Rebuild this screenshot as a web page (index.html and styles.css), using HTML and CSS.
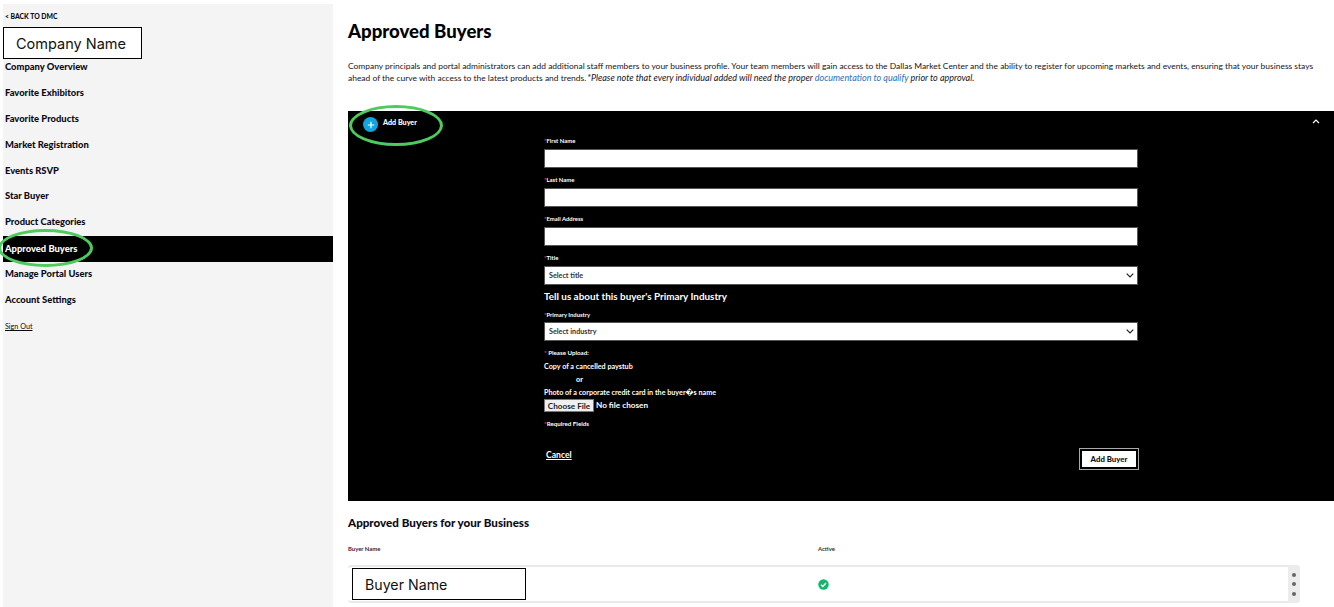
FILE: index.html
```html
<!DOCTYPE html>
<html lang="en">
<head>
<meta charset="utf-8">
<title>Approved Buyers</title>
<link rel="stylesheet" href="styles.css">
</head>
<body>
<div class="page">
  <aside class="sidebar">
    <a class="back" href="#">&lt; BACK TO DMC</a>
    <div class="company-box">Company Name</div>
    <nav class="nav">
      <a class="nav-item" href="#">Company Overview</a>
      <a class="nav-item" href="#">Favorite Exhibitors</a>
      <a class="nav-item" href="#">Favorite Products</a>
      <a class="nav-item" href="#">Market Registration</a>
      <a class="nav-item" href="#">Events RSVP</a>
      <a class="nav-item" href="#">Star Buyer</a>
      <a class="nav-item" href="#">Product Categories</a>
      <a class="nav-item active" href="#">Approved Buyers<span class="ring ring-nav"></span></a>
      <a class="nav-item" href="#">Manage Portal Users</a>
      <a class="nav-item" href="#">Account Settings</a>
    </nav>
    <a class="signout" href="#">Sign Out</a>
  </aside>
  <main class="main">
    <h1 class="title">Approved Buyers</h1>
    <p class="intro">Company principals and portal administrators can add additional staff members to your business profile. Your team members will gain access to the Dallas Market Center and the ability to register for upcoming markets and events, ensuring that your business stays<br>ahead of the curve with access to the latest products and trends. <em class="note">*Please note that every individual added will need the proper <a class="doc-link" href="#">documentation to qualify</a> prior to approval.</em></p>
    <section class="panel">
      <div class="panel-head">
        <div class="add-toggle">
          <span class="plus">
            <svg width="8" height="8" viewBox="0 0 8 8"><path d="M4 .8v6.4M.8 4h6.4" stroke="#fff" stroke-width="1.2" fill="none"/></svg>
          </span>
          <span class="add-label">Add Buyer</span>
          <span class="ring ring-add"></span>
        </div>
        <svg class="collapse" width="8" height="5" viewBox="0 0 8 5"><path d="M1 4l3-3 3 3" stroke="#fff" stroke-width="1.2" fill="none"/></svg>
      </div>
      <form class="form">
        <label class="label"><span class="req">*</span>First Name</label>
        <div class="input"></div>
        <label class="label"><span class="req">*</span>Last Name</label>
        <div class="input"></div>
        <label class="label"><span class="req">*</span>Email Address</label>
        <div class="input"></div>
        <label class="label"><span class="req">*</span>Title</label>
        <div class="input select">Select title
          <svg width="8" height="5" viewBox="0 0 8 5"><path d="M.7.7L4 4l3.3-3.3" stroke="#222" stroke-width="1.2" fill="none"/></svg>
        </div>
        <h3 class="form-heading">Tell us about this buyer's Primary Industry</h3>
        <label class="label label-tight"><span class="req">*</span>Primary Industry</label>
        <div class="input select">Select industry
          <svg width="8" height="5" viewBox="0 0 8 5"><path d="M.7.7L4 4l3.3-3.3" stroke="#222" stroke-width="1.2" fill="none"/></svg>
        </div>
        <div class="label upload-label"><span class="req">*</span> Please Upload:</div>
        <div class="upload-line">Copy of a cancelled paystub</div>
        <div class="upload-line upload-or">or</div>
        <div class="upload-line">Photo of a corporate credit card in the buyer<span class="bad-char">�</span>s name</div>
        <div class="file-row"><button class="file-btn" type="button">Choose File</button><span>No file chosen</span></div>
        <div class="label required-note"><span class="req">*</span>Required Fields</div>
        <div class="actions">
          <a class="cancel" href="#">Cancel</a>
          <button class="submit" type="button">Add Buyer</button>
        </div>
      </form>
    </section>
    <h2 class="list-title">Approved Buyers for your Business</h2>
    <div class="list-head">
      <span class="col-name">Buyer Name</span>
      <span class="col-active">Active</span>
    </div>
    <div class="row">
      <div class="buyer-box">Buyer Name</div>
      <svg class="check" width="11" height="11" viewBox="0 0 11 11"><circle cx="5.5" cy="5.5" r="5.2" fill="#12b76a"/><path d="M3 5.7l1.8 1.8L8 4" stroke="#fff" stroke-width="1.4" fill="none"/></svg>
      <div class="kebab"><i></i><i></i><i></i></div>
    </div>
  </main>
</div>
</body>
</html>
```
FILE: styles.css
```css
* { box-sizing: border-box; }
html, body { margin: 0; height: 100%; overflow: hidden; background: #fff; }
body { font-family: "Lato", "Liberation Sans", sans-serif; color: #0b0b14; }
a { color: inherit; }

.page { display: flex; height: 607px; overflow: hidden; }

.sidebar {
  width: 330px;
  margin: 4px 0 0 3px;
  background: #f4f4f4;
  flex: none;
  display: flex;
  flex-direction: column;
  overflow: visible;
}
.back {
  margin: 9px 0 0 2px;
  height: 14px;
  line-height: 6px;
  font-size: 6.8px;
  font-weight: 900;
  text-decoration: none;
}
.company-box {
  width: 139px;
  height: 32px;
  border: 1px solid #000;
  background: #fff;
  padding-left: 12px;
  line-height: 31px;
  font-family: "Inter", "Liberation Sans", sans-serif;
  font-size: 14.5px;
  color: #111;
}
.nav { display: flex; flex-direction: column; margin-top: -4px; }
.nav-item {
  position: relative;
  height: 25.9px;
  line-height: 24px;
  padding-left: 2px;
  font-size: 9.4px;
  font-weight: 900;
  text-decoration: none;
  white-space: nowrap;
}
.nav-item.active { background: #000; color: #fff; line-height: 25px; }
.ring { position: absolute; border: 3.5px solid #4ecb5d; border-radius: 50%; pointer-events: none; }
.ring-nav { left: -5px; top: -7px; width: 95px; height: 38px; }
.signout { margin: 7px 0 0 2px; font-size: 7.2px; font-weight: 400; line-height: 12px; }

.main { flex: 1; min-width: 0; padding: 0 0 0 15px; display: flex; flex-direction: column; }
.title { margin: 20px 0 0; font-size: 18.6px; line-height: 22px; font-weight: 900; color: #000; }
.intro { margin: 18px 0 0; font-size: 8.45px; line-height: 12px; color: #15151f; white-space: nowrap; }
.note { font-size: 9px; margin-left: -1px; }
.doc-link { color: #2f6fb5; text-decoration: none; }

.panel { margin-top: 27px; height: 390px; background: #000; color: #fff; flex: none; }
.panel-head { height: 26px; display: flex; justify-content: space-between; align-items: flex-start; padding: 0 14px 0 15px; }
.add-toggle { position: relative; display: flex; align-items: center; margin-top: 6px; height: 15px; }
.plus { width: 15px; height: 15px; border-radius: 50%; background: #0ea5e0; display: flex; align-items: center; justify-content: center; }
.add-label { margin-left: 5px; margin-top: -4px; font-size: 7.2px; font-weight: 900; }
.ring-add { left: -14px; top: -12px; width: 94px; height: 41px; }
.collapse { margin-top: 8px; }

.form { width: 594px; margin-left: 196px; display: flex; flex-direction: column; }
.label { display: block; font-size: 5.9px; font-weight: 700; line-height: 8px; height: 12px; color: #fff; }
.req { color: #e0343c; }
.input { height: 19px; margin-bottom: 8px; background: #fff; border: 1px solid #555; }
.select {
  display: flex; justify-content: space-between; align-items: center;
  padding: 0 3px 0 4px;
  font-size: 7.2px; font-weight: 700; color: #333;
  margin-bottom: 0;
}
.form-heading { margin: 4px 0 0; height: 18px; font-size: 9.9px; line-height: 14px; font-weight: 700; color: #fff; }
.label-tight { margin-top: 4px; height: 11px; }
.upload-label { margin-top: 8px; height: 11px; font-size: 6.2px; }
.upload-line { font-size: 7.2px; font-weight: 700; line-height: 13px; height: 13px; }
.upload-or { padding-left: 32px; font-weight: 900; }
.bad-char { font-family: "DejaVu Sans", sans-serif; }
.file-row { display: flex; align-items: center; gap: 2px; height: 13px; font-size: 8.2px; font-weight: 700; line-height: 11px; }
.file-btn {
  width: 50px; height: 13px; padding: 0;
  background: #efefef; border: 1px solid #777; color: #222;
  font: 700 8.2px "Lato", sans-serif;
}
.required-note { margin-top: 8px; font-size: 6.2px; }
.actions { display: flex; justify-content: space-between; align-items: flex-start; margin-top: 16px; }
.cancel { margin: 1px 0 0 2px; font-size: 8.6px; font-weight: 700; line-height: 12px; color: #fff; }
.submit {
  width: 60px; height: 22px; padding: 0; margin-right: -1px;
  background: #fff; color: #101020;
  border: 2px solid #000; outline: 1px solid #aaa; outline-offset: -1px;
  box-shadow: inset 0 0 0 1px #000;
  font: 900 7.8px "Lato", sans-serif;
}

.list-title { margin: 15px 0 0; font-size: 11.6px; line-height: 14px; font-weight: 900; color: #0b0b14; }
.list-head { display: flex; margin-top: 15px; font-size: 5.9px; line-height: 8px; height: 8px; font-weight: 700; }
.col-name { width: 470px; color: #4b1a2c; }
.col-active { color: #333; }
.row {
  position: relative;
  margin-top: 12px;
  width: 952px; height: 38px; flex: none;
  border-radius: 4px; background: #fff;
  border-top: 2px solid #e8e8e8; border-bottom: 2px solid #e8e8e8;
  display: flex; align-items: center;
}
.buyer-box {
  margin-left: 4px;
  width: 174px; height: 32px;
  border: 1px solid #000; background: #fff;
  padding-left: 12px; line-height: 31px;
  font-family: "Inter", "Liberation Sans", sans-serif;
  font-size: 14.2px; color: #111;
}
.check { margin-left: 292px; }
.kebab {
  margin-left: auto; width: 12px; align-self: stretch;
  margin-top: -2px; margin-bottom: -2px;
  background: #ececec; border-radius: 0 4px 4px 0;
  display: flex; flex-direction: column; align-items: center; justify-content: center; gap: 5.5px;
}
.kebab i { width: 4px; height: 4px; border-radius: 50%; background: #666; display: block; }
```
